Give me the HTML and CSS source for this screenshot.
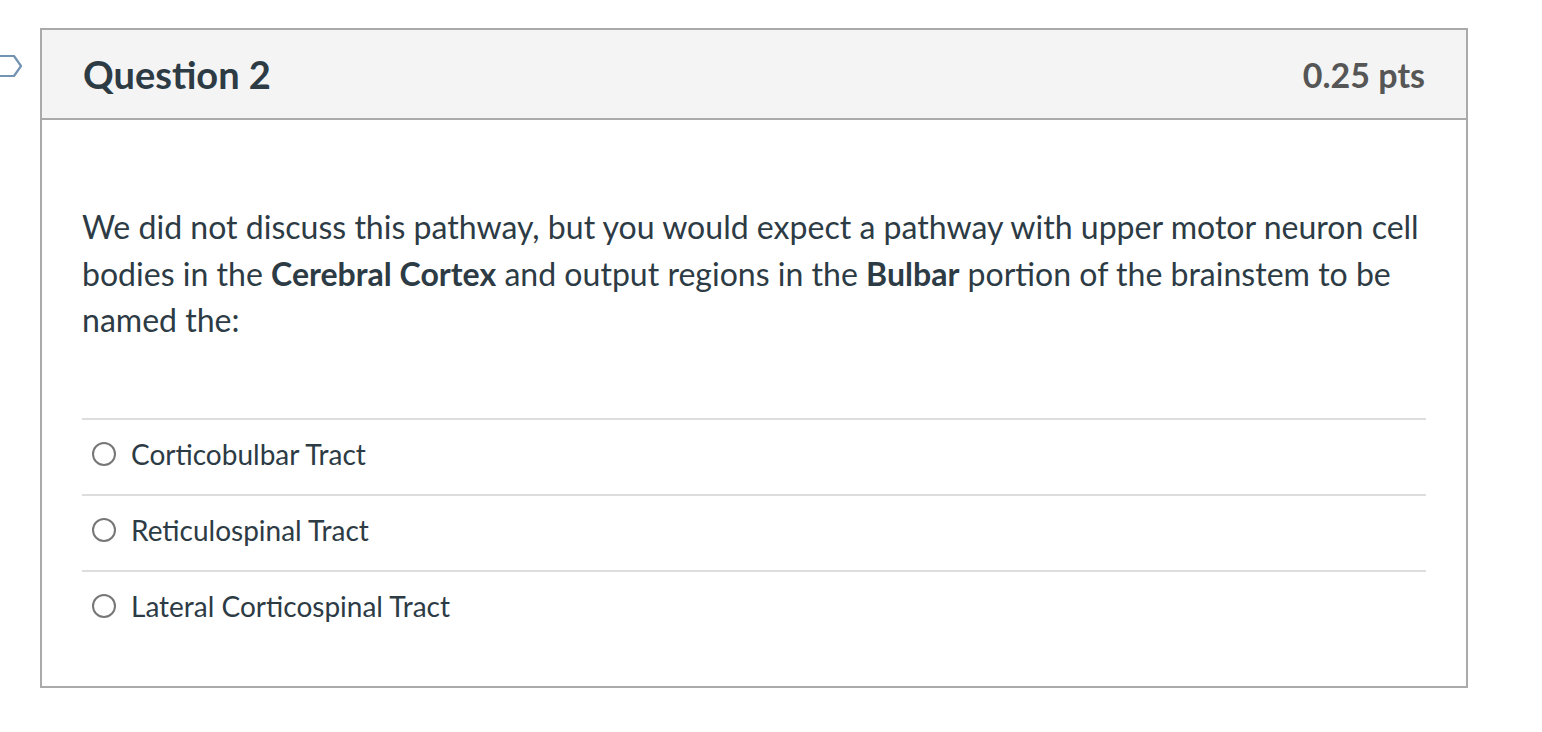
FILE: index.html
```html
<!DOCTYPE html>
<html>
<head>
<meta charset="utf-8">
<link rel="stylesheet" href="styles.css">
</head>
<body>
<div class="page">
  <svg class="flag" width="24" height="26" viewBox="0 0 24 26" aria-hidden="true">
    <path d="M-6 2 H14 L21 12 L14 22 H-6" fill="none" stroke="#7393b2" stroke-width="2.2" stroke-linejoin="round"/>
  </svg>
  <div class="card">
    <div class="card-header">
      <h2 class="title">Question 2</h2>
      <div class="points">0.25 pts</div>
    </div>
    <div class="card-body">
      <p class="question">We did not discuss this pathway, but you would expect a pathway with upper motor neuron cell bodies in the <strong>Cerebral Cortex</strong> and output regions in the <strong>Bulbar</strong> portion of the brainstem to be named the:</p>
      <div class="answers">
        <label class="answer"><span class="radio"></span><span class="answer-text">Corticobulbar Tract</span></label>
        <label class="answer"><span class="radio"></span><span class="answer-text">Reticulospinal Tract</span></label>
        <label class="answer"><span class="radio"></span><span class="answer-text">Lateral Corticospinal Tract</span></label>
      </div>
    </div>
  </div>
</div>
</body>
</html>
```
FILE: styles.css
```css
html, body {
  margin: 0;
  padding: 0;
  background: #ffffff;
}
body {
  font-family: Lato, "Open Sans", "Liberation Sans", sans-serif;
  color: #2d3b45;
}
.page {
  position: relative;
  padding: 28px 0 0 40px;
}
.flag {
  position: absolute;
  left: 0;
  top: 54px;
}
.card {
  width: 1424px;
  border: 2px solid #aaaaaa;
  box-sizing: content-box;
}
.card-header {
  display: flex;
  align-items: center;
  justify-content: space-between;
  height: 88px;
  padding: 0 41px;
  background: #f4f4f4;
  border-bottom: 2px solid #aaaaaa;
}
.title {
  margin: 0;
  font-size: 38px;
  font-weight: 700;
  color: #2d3b45;
}
.points {
  font-size: 34px;
  font-weight: 700;
  color: #565656;
}
.card-body {
  padding: 84px 40px 40px;
}
.question {
  margin: 0 0 74px;
  font-size: 32.05px;
  line-height: 46.5px;
  color: #2d3b45;
}
.question strong {
  font-weight: 700;
}
.answers {
  display: flex;
  flex-direction: column;
}
.answer {
  display: flex;
  align-items: center;
  gap: 15px;
  border-top: 2px solid #dddddd;
  padding: 0 0 6px 10px;
  box-sizing: border-box;
  height: 76px;
}
.radio {
  width: 24px;
  height: 24px;
  border: 2px solid #777777;
  border-radius: 50%;
  box-sizing: border-box;
  flex: none;
}
.answer-text {
  font-size: 28px;
  color: #2d3b45;
}
```
